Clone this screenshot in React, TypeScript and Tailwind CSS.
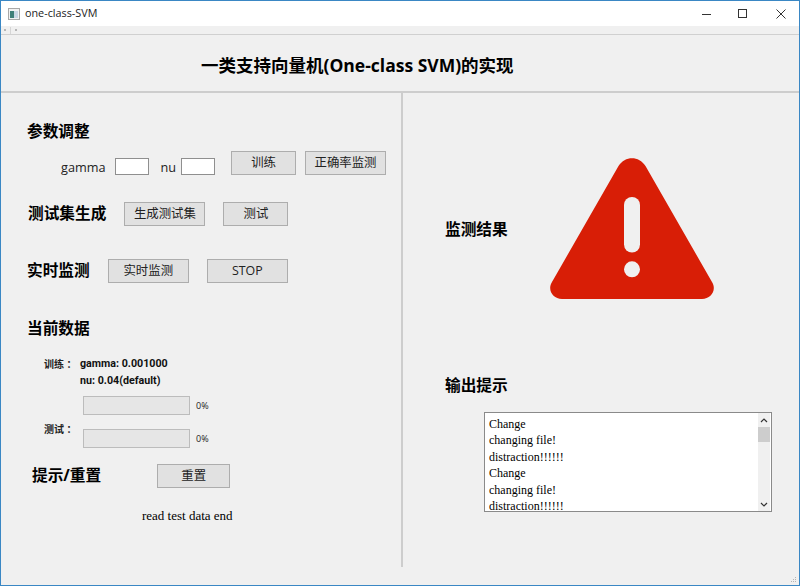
const FONT = "font-['Open_Sans','Noto_Sans_CJK_SC',sans-serif]";
const SERIF = "font-['Liberation_Serif','Noto_Sans_CJK_SC',serif]";
const DATA = "font-['Roboto','Noto_Sans_CJK_SC',sans-serif]";
const LINES = ['Change', 'changing file!', 'distraction!!!!!!', 'Change', 'changing file!', 'distraction!!!!!!'];

function Btn({ label, width }: { label: string; width: string }) {
  return (
    <button className={`${width} h-[24px] shrink-0 bg-[#e1e1e1] border border-[#adadad] text-[12.4px] leading-none text-[#222]`}>
      {label}
    </button>
  );
}

function Heading({ children, className = '' }: { children: React.ReactNode; className?: string }) {
  return <div className={`h-[24px] text-[15.7px] leading-[24px] font-bold text-black whitespace-nowrap ${className}`}>{children}</div>;
}

function Field({ width }: { width: string }) {
  return <div className={`${width} h-[17px] bg-white border border-[#8f8f8f]`} />;
}

function Progress() {
  return (
    <div className="flex items-center h-[19px]">
      <div className="w-[107px] h-[19px] bg-[#e6e6e6] border border-[#bcbcbc]" />
      <span className="ml-[6px] text-[9px] text-[#222]">0%</span>
    </div>
  );
}

export default function App() {
  return (
    <div className={`${FONT} w-[800px] h-[586px] flex flex-col bg-[#f0f0f0] border border-[#3a87c4] overflow-hidden text-black`}>
      {/* window title bar */}
      <div className="h-[25px] shrink-0 bg-white flex items-center pl-[7px]">
        <svg width="12" height="12" viewBox="0 0 12 12">
          <rect x="0.5" y="0.5" width="11" height="11" fill="#f2f2f2" stroke="#a8a8a8" />
          <rect x="2" y="3" width="4" height="7" fill="#3f7f78" />
          <rect x="6" y="3" width="4" height="7" fill="#c9d6e4" />
        </svg>
        <span className="ml-[5px] text-[10.8px] text-[#222] -mt-px">one-class-SVM</span>
        <div className="ml-auto flex items-center text-[#333]">
          <svg className="mr-[27px]" width="9" height="10" viewBox="0 0 9 10"><path d="M0 5.5H9" stroke="#333" /></svg>
          <svg className="mr-[29px]" width="9" height="9" viewBox="0 0 9 9"><rect x="0.5" y="0.5" width="8" height="8" fill="none" stroke="#333" /></svg>
          <svg className="mr-[13px]" width="10" height="10" viewBox="0 0 10 10"><path d="M0.5 0.5L9.5 9.5M9.5 0.5L0.5 9.5" stroke="#333" /></svg>
        </div>
      </div>

      {/* toolbar strip */}
      <div className="h-[9px] shrink-0 bg-[#f0f0f0] border-b border-[#d0d0d0] flex items-center pl-[3px] gap-[4px]">
        <div className="w-[2px] h-[2px] bg-[#b5b5b5]" />
        <div className="w-px h-[7px] bg-[#d5d5d5]" />
        <div className="w-[2px] h-[2px] bg-[#b5b5b5]" />
      </div>

      {/* header */}
      <div className="h-[58px] shrink-0 border-b-2 border-[#cdcdcd] flex items-center pl-[200px] pt-[5px]">
        <h1 className="text-[17.5px] font-bold text-black whitespace-nowrap">一类支持向量机(One-class SVM)的实现</h1>
      </div>

      <div className="flex flex-1 min-h-0">
        {/* left column */}
        <div className="w-[402px] h-[474px] shrink-0 border-r-2 border-[#cdcdcd] pt-[26px] flex flex-col">
          <Heading className="ml-[26px]">参数调整</Heading>

          <div className="mt-[8px] h-[24px] flex items-end ml-[60px]">
            <span className="text-[12.7px] text-[#222] leading-[15px]">gamma</span>
            <div className="ml-[10px]"><Field width="w-[34px]" /></div>
            <span className="ml-[11px] text-[12.7px] text-[#222] leading-[15px]">nu</span>
            <div className="ml-[5px]"><Field width="w-[34px]" /></div>
            <div className="ml-[16px]"><Btn label="训练" width="w-[65px]" /></div>
            <div className="ml-[9px]"><Btn label="正确率监测" width="w-[81px]" /></div>
          </div>

          <div className="mt-[25px] h-[24px] flex items-start ml-[27px]">
            <Heading className="mt-px">测试集生成</Heading>
            <div className="ml-[18px]"><Btn label="生成测试集" width="w-[81px]" /></div>
            <div className="ml-[18px]"><Btn label="测试" width="w-[65px]" /></div>
          </div>

          <div className="mt-[33px] h-[24px] flex items-start ml-[26px]">
            <Heading className="mt-px">实时监测</Heading>
            <div className="ml-[18px]"><Btn label="实时监测" width="w-[81px]" /></div>
            <div className="ml-[18px]"><Btn label="STOP" width="w-[81px]" /></div>
          </div>

          <Heading className="mt-[35px] ml-[26px]">当前数据</Heading>

          <div className="mt-[16px] ml-[43px] flex h-[17px] items-center">
            <span className="w-[36px] text-[10px] font-bold text-[#222]">训练 ：</span>
            <span className={`${DATA} text-[10.7px] font-bold text-[#111]`}>gamma: 0.001000</span>
          </div>
          <div className={`${DATA} ml-[79px] h-[17px] flex items-center text-[10.7px] font-bold text-[#111]`}>nu: 0.04(default)</div>

          <div className="mt-[6px] ml-[82px]"><Progress /></div>

          <div className="mt-[6px] ml-[43px] h-[27px] flex items-start">
            <span className="w-[39px] h-[16px] text-[10px] leading-[16px] font-bold text-[#222]">测试 ：</span>
            <div className="mt-[8px]"><Progress /></div>
          </div>

          <div className="mt-[14px] h-[24px] flex items-start ml-[31px]">
            <Heading className="mt-px">提示/重置</Heading>
            <div className="ml-[56px]"><Btn label="重置" width="w-[73px]" /></div>
          </div>

          <div className={`${SERIF} mt-[21px] ml-[141px] h-[18px] text-[13px] leading-[18px] text-black`}>read test data end</div>
        </div>

        {/* right column */}
        <div className="flex-1 flex flex-col pl-[42px]">
          <div className="flex items-start pt-[65px]">
            <Heading className="mt-[59px]">监测结果</Heading>
            <svg className="ml-[42px] overflow-visible" width="164" height="141" viewBox="0 0 164 141">
              <path d="M68.5 8C75 -2.5 89 -2.5 95.5 8L162 124C167 132 161 141 152 141L12 141C3 141 -3 132 2 124Z" fill="#d81e06" />
              <rect x="74" y="39" width="16" height="55.5" rx="8" fill="#f0f0f0" />
              <circle cx="82" cy="111.3" r="8" fill="#f0f0f0" />
            </svg>
          </div>

          <Heading className="mt-[74px]">输出提示</Heading>

          <div className="mt-[15px] ml-[39px] w-[288px] h-[100px] bg-white border border-[#8a8a8a] flex">
            <div className={`${SERIF} flex-1 h-[98px] overflow-hidden pl-[4px] pt-[3px] text-[12px] leading-[16.4px] text-black`}>
              {LINES.map((l, i) => <div key={i}>{l}</div>)}
            </div>
            <div className="w-[12px] mr-[1px] bg-[#f0f0f0] flex flex-col items-center">
              <svg className="mt-[5px]" width="8" height="5" viewBox="0 0 8 5"><path d="M1 4L4 1L7 4" fill="none" stroke="#333" strokeWidth="1.2" /></svg>
              <div className="w-full h-[15px] mt-[4px] bg-[#cdcdcd]" />
              <svg className="mt-auto mb-[4px]" width="8" height="5" viewBox="0 0 8 5"><path d="M1 1L4 4L7 1" fill="none" stroke="#333" strokeWidth="1.2" /></svg>
            </div>
          </div>

          <div className="mt-auto self-end mr-[2px] mb-[2px]">
            <svg width="7" height="7" viewBox="0 0 7 7" fill="#b5b5b5">
              <rect x="5" y="1" width="1" height="1" /><rect x="3" y="3" width="1" height="1" /><rect x="5" y="3" width="1" height="1" />
              <rect x="1" y="5" width="1" height="1" /><rect x="3" y="5" width="1" height="1" /><rect x="5" y="5" width="1" height="1" />
            </svg>
          </div>
        </div>
      </div>
    </div>
  );
}
